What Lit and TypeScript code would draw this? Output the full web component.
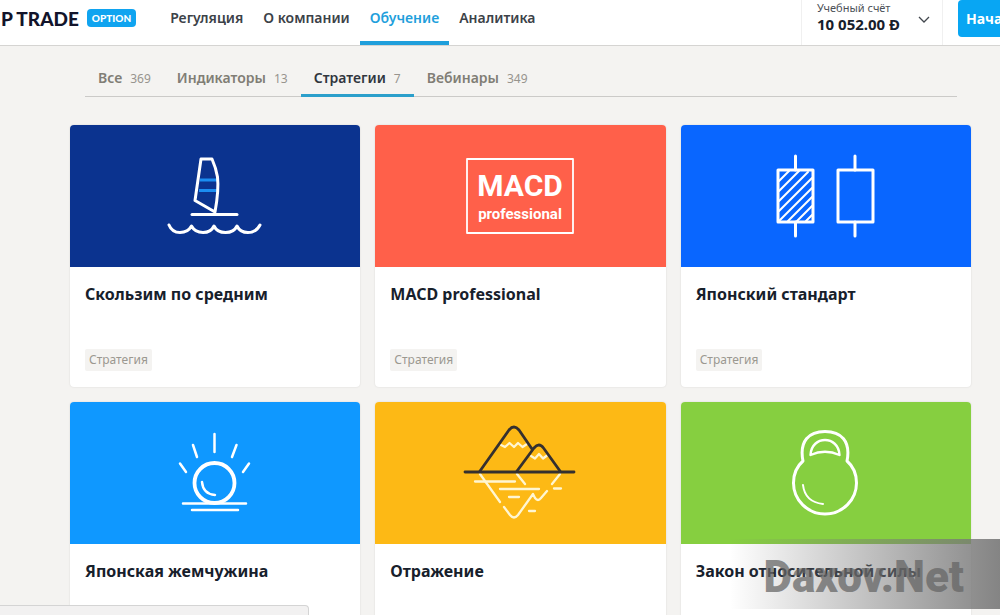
import { LitElement, html, svg, css } from "lit";
import { customElement, property } from "lit/decorators.js";

const sail = svg`<svg class="white" width="130" height="102" viewBox="0 0 130 102" stroke-width="3">
  <path d="M50 35H67M49 45.500H68" stroke="#1b8df2" stroke-linecap="butt"/>
  <path d="M51 14H62Q66 23 67.500 32Q69 45 65 67L45 55.500Z"/>
  <path d="M42 69.500H87"/>
  <path d="M19 80Q22 87.500 30 87.500Q38 87.500 41.500 81Q45 87.500 53 87.500Q61 87.500 64 81Q67 87.500 75.500 87.500Q84 87.500 87 81Q90 87.500 98 87.500Q106 87.500 110 80"/>
</svg>`;

const macd = svg`<svg class="white" width="130" height="102" viewBox="0 0 130 102" stroke-width="1.800">
  <rect x="12" y="14" width="106" height="74"/>
  <text class="macd" x="65" y="51">MACD</text>
  <text class="pro" x="65" y="74">professional</text>
</svg>`;

const candles = svg`<svg class="white" width="130" height="102" viewBox="0 0 130 102" stroke-width="3">
  <path d="M34.500 11V25M34.500 77V91M94 11V25M94 77V91"/>
  <rect x="17" y="25" width="35" height="52"/>
  <rect x="77" y="25" width="35" height="52"/>
  <path stroke-width="2" d="M18 36L28 26M18 46L38 26M18 56L47 27M18 66L51 33M18 76L51 43M27 76L51 52M36 76L51 61M45 76L51 70"/>
</svg>`;

const pearl = svg`<svg class="white" width="110" height="106" viewBox="0 0 110 106" stroke-width="2.500">
  <circle cx="54.500" cy="63" r="20" stroke-width="3.800"/>
  <path d="M42 62Q43 74 55 75"/>
  <path d="M54.500 14V32M33 25L37 37M76.500 25L72 37M20 43.500L26 52M89 43.500L83 52"/>
  <path d="M23 83.500H86M32 90H78"/>
</svg>`;

const peaks = svg`<svg class="white" width="130" height="116" viewBox="0 0 130 116" stroke-width="2.500">
  <g stroke="#fff6d2" stroke-width="2.300">
    <path d="M46 30L50 32L54.500 28L59 32L63 28L67.500 32L72 29M76 41L80 43.500L84 39L88 43.500L92 40.500"/>
    <path d="M25 59L45 87M49 92L55 100Q59 105 63 100L78 79L80 83Q83 87 86 83L92 76M62 59L70 69M105 59L97 69"/>
    <path d="M20 66.500H60M45 74H84M54 82H64M99 73.500H106M74 96H80"/>
  </g>
  <g stroke="#35302f" stroke-width="2.800">
    <path d="M25 56L54 15Q59 9 64 15L77 34M62 56L79 33Q84 27 88.500 33L105 56"/>
    <path d="M10 57H119"/>
  </g>
</svg>`;

const kettlebell = svg`<svg class="white" width="110" height="106" viewBox="0 0 110 106" stroke-width="3">
  <path d="M32 41C28 21 38 11.500 54 11.500C70 11.500 80 21 76 41C83 47 85.500 55 85.500 63A31.500 31 0 0 1 22.500 63C22.500 55 25 47 32 41Z"/>
  <path stroke-width="2.400" d="M39.500 35C40 25 47 20 54 20C61 20 68 25 68.500 35Q54 28.500 39.500 35Z"/>
  <path stroke-width="2" d="M32 65Q34 82 52 84"/>
</svg>`;

@customElement("strategy-card")
class StrategyCard extends LitElement {
  @property() heading = "";
  @property() tone = "";
  @property({ attribute: false }) art: unknown;

  static styles = css`
    :host {
      display: flex;
      flex-direction: column;
      background: #fff;
      border-radius: 4px;
      overflow: hidden;
      box-shadow: 0 0 2px rgba(0, 0, 0, 0.12);
    }
    .art {
      height: 142px;
      display: flex;
      align-items: center;
      justify-content: center;
    }
    .navy { background: #0b338f; }
    .coral { background: #ff604a; }
    .blue { background: #0966ff; }
    .sky { background: #0f98ff; }
    .amber { background: #fdb915; }
    .green { background: #86cf40; }
    .white {
      fill: none;
      stroke: #fff;
      stroke-linecap: round;
      stroke-linejoin: round;
    }
    .macd, .pro {
      fill: #fff;
      stroke: none;
      text-anchor: middle;
      font-family: Roboto, sans-serif;
      font-weight: 700;
    }
    .macd { font-size: 30px; }
    .pro { font-size: 15px; }
    .body {
      flex: 1;
      display: flex;
      flex-direction: column;
      align-items: flex-start;
      justify-content: space-between;
      min-height: 88px;
      padding: 16px 15px;
    }
    h2 {
      margin: 0;
      font-size: 16px;
      line-height: 22px;
      font-weight: 700;
      color: #17202b;
    }
    .tag {
      padding: 0 4px;
      border-radius: 2px;
      background: #f4f3f1;
      color: #9b9890;
      font-size: 12px;
      line-height: 22px;
    }
  `;

  render() {
    return html`
      <div class="art ${this.tone}">${this.art}</div>
      <div class="body">
        <h2>${this.heading}</h2>
        <span class="tag">Стратегия</span>
      </div>
    `;
  }
}

@customElement("app-root")
class AppRoot extends LitElement {
  static styles = css`
    :host {
      display: block;
      position: relative;
      height: 100vh;
      overflow: hidden;
      background: #f4f3f1;
      font-family: "Noto Sans", "Open Sans", sans-serif;
      color: #17202b;
    }
    a { color: inherit; text-decoration: none; }
    .top {
      display: flex;
      height: 46px;
      background: #fff;
      border-bottom: 1px solid #d5d4d2;
      box-sizing: border-box;
      overflow: hidden;
    }
    .brand {
      display: flex;
      align-items: center;
      gap: 8px;
      height: 36px;
      padding-left: 1px;
      font-family: Lato, sans-serif;
      font-weight: 900;
      font-size: 19px;
      color: #12142b;
      white-space: nowrap;
    }
    .badge {
      padding: 0 5px;
      border-radius: 4px;
      background: #10a4f0;
      color: #fff;
      font-size: 10px;
      line-height: 18px;
    }
    .nav { display: flex; margin-left: 24px; }
    .nav a {
      padding: 0 10px;
      font-size: 14px;
      line-height: 36px;
      font-weight: 600;
      color: #3c4248;
      white-space: nowrap;
    }
    .nav .on {
      color: #1f9fdc;
      border-bottom: 4px solid #1f9fdc;
      padding-bottom: 5px;
    }
    .account {
      display: flex;
      align-items: center;
      gap: 14px;
      width: 142px;
      margin-left: auto;
      padding: 0 12px 0 15px;
      box-sizing: border-box;
      border: 0 solid #f0f0f0;
      border-width: 0 1px;
      background: none;
      font-family: inherit;
      color: inherit;
      text-align: left;
    }
    .money { display: flex; flex-direction: column; height: 43px; }
    .kind { font-size: 11px; line-height: 14px; color: #4c5157; }
    .sum { font-size: 15px; line-height: 18px; font-weight: 700; white-space: nowrap; }
    .arrow { fill: none; stroke: #42474e; flex: none; margin: 0 0 6px auto; }
    .start {
      width: 42px;
      height: 37px;
      margin-left: 15px;
      padding: 0 0 0 8px;
      border: 0;
      border-radius: 4px 0 0 4px;
      background: #08a6f3;
      color: #fff;
      font-family: inherit;
      font-size: 14px;
      font-weight: 700;
      text-align: left;
      overflow: hidden;
    }
    .tabs {
      display: flex;
      height: 50px;
      margin: 0 43px 0 85px;
      border-bottom: 1px solid #cbcac8;
    }
    .tabs a {
      display: flex;
      align-items: baseline;
      gap: 8px;
      padding: 0 13px;
      margin-bottom: -1px;
      box-sizing: border-box;
      font-size: 14px;
      line-height: 63px;
      height: 51px;
      font-weight: 600;
      color: #807d75;
    }
    .tabs .on { color: #30363e; border-bottom: 3px solid #2b9fcb; }
    .count { font-size: 12px; font-weight: 400; color: #97948e; }
    .grid {
      display: grid;
      grid-template-columns: repeat(3, 1fr);
      gap: 15px;
      margin: 28px 29px 0 70px;
    }
    .status {
      position: absolute;
      left: 0;
      bottom: 0;
      width: 308px;
      height: 9px;
      background: #f2f1f1;
      border: 1px solid #d4d4d4;
      border-width: 1px 1px 0 0;
      border-radius: 0 4px 0 0;
    }
    .mark {
      position: absolute;
      right: 0;
      bottom: 6px;
      width: 270px;
      height: 70px;
      padding-right: 36px;
      box-sizing: border-box;
      background: linear-gradient(90deg, rgba(120, 120, 120, 0), rgba(120, 120, 120, 0.9));
      color: rgba(100, 100, 100, 0.72);
      font-family: Roboto, sans-serif;
      font-weight: 900;
      font-size: 44px;
      line-height: 76px;
      text-align: right;
    }
  `;

  private sections = ["Регуляция", "О компании", "Обучение", "Аналитика"];
  private tabs: [string, number][] = [["Все", 369], ["Индикаторы", 13], ["Стратегии", 7], ["Вебинары", 349]];
  private cards: [string, string, unknown][] = [
    ["Скользим по средним", "navy", sail],
    ["MACD professional", "coral", macd],
    ["Японский стандарт", "blue", candles],
    ["Японская жемчужина", "sky", pearl],
    ["Отражение", "amber", peaks],
    ["Закон относительной силы", "green", kettlebell],
  ];

  render() {
    return html`
      <header class="top">
        <a class="brand" href="#"><span>P TRADE</span><span class="badge">OPTION</span></a>
        <nav class="nav">
          ${this.sections.map((s) => html`<a href="#" class=${s === "Обучение" ? "on" : ""}>${s}</a>`)}
        </nav>
        <button class="account">
          <span class="money"><span class="kind">Учебный счёт</span><span class="sum">10 052.00 Đ</span></span>
          <svg class="arrow" width="12" height="8" viewBox="0 0 12 8" stroke-width="1.300"><path d="M1 1L6 6L11 1"/></svg>
        </button>
        <button class="start">Нача</button>
      </header>
      <nav class="tabs">
        ${this.tabs.map(([name, n]) => html`<a href="#" class=${name === "Стратегии" ? "on" : ""}><span>${name}</span><span class="count">${n}</span></a>`)}
      </nav>
      <main class="grid">
        ${this.cards.map(([heading, tone, art]) => html`<strategy-card .heading=${heading} .tone=${tone} .art=${art}></strategy-card>`)}
      </main>
      <div class="status"></div>
      <div class="mark">Daxov.Net</div>
    `;
  }
}
